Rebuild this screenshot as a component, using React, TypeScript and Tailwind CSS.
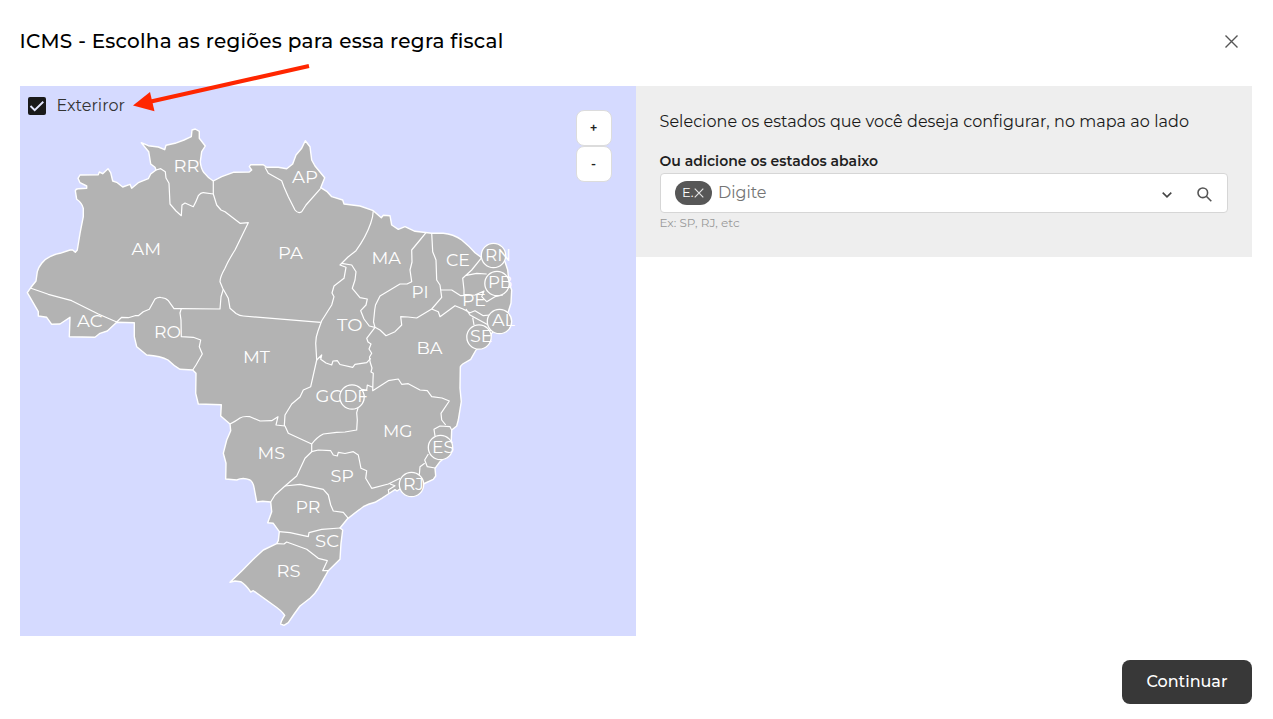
import React from "react";

type Label = { t: string; x: number; w: number; y: number; c?: [number, number] };

const OUTLINE =
  "M27.3 292.7L31 287.3L36 281L37.3 271.7Q38 268 41.7 263.3Q45 259 50 256.7Q55 254 60 253.3L70 250L72.7 250L75.3 252.3L77.3 250L80 233.3L83.3 216.7L83.3 208.3Q82 203 76.7 199.3L75.3 190.7Q76 188.6 78.3 188.7L86.7 188.3L86.7 186L80 182.7L78 178.3L80 175L98.3 174.7L99.3 172L102.7 173.7L108 168.7L110.7 172.7L112.7 181L116.7 182.3L122.7 187L130 184.3L131.7 188.3L138.3 182.7L148.3 178.7L150.7 174L156 170L155 167.3L150.7 164L148.7 151.7L141.3 142.7L148.3 145.7L158.3 147L164.7 149.7L166 145.3L175 143.3L184 140L191.3 136.7L192 130L195.3 129L199.3 131.3L199.3 138.3L205.3 146L201.7 151.7L200.3 161.7Q201 169 204 172.7Q208 178 213.3 181L221.7 176.7L233.3 172.3L249.3 172L251.7 170L249.3 166.7L250.7 164.7L263.3 164.7L266.7 167.3L278.3 167.3L286.7 168.7L292.7 164L296 155L301.7 148.3L305.3 140.7L310 146.7L311.7 160L315 166L324.7 177.7L320.7 187.7L326.7 191.3L331.7 196.7L342.7 200L344 204L360 206L373.3 210.7L381.3 217.7L383.3 215.3L390 215.7L391.7 225L398.3 229.3L405 226.7L415 231.3L431.7 233.3L443.3 233.3Q453 234 461.7 240Q469 246 475 252.7L481.7 257.7L494 254L505 261.7L507.7 270L509 283L511.7 290L511 303.3L508.3 311.7L500 325L491.7 333.3L488 343L476 350L470.7 359.3L462.7 364Q460 366 460.3 368.3L460 388.3L461.3 401.7L458.3 420L456.7 426L451.7 430L451.3 440L450 453L440 461.7L435 468.3L435.7 476L433.3 479.3L423.3 484L411 492L403 487L397 491L395 489.7L388.3 494L381.7 498.3L375 502.3Q368 504 363.3 506.7Q356 512 347.3 519L340 528L342.7 530L341 543.3L340 559.3L328.3 570.7L318.3 588.3Q315 594 310 598.3L300 606Q294 614 288.3 622.7L284 625.3L280.7 624Q281 621 284.7 615.3Q282 611 273.3 605L253.3 590.7L250.7 592Q246 585 240.7 581.7L235 581L230 582.3L241.7 571L253.3 559.3L263.3 550L276.7 543.7L278.3 540.7L279.3 531.7L273.3 523.3L267.7 522.7L271.7 511.7L270.7 502L262.7 501.3L256.7 502L254 487.3Q253 482 250 480Q243 477 236.7 480L225.7 479L226 463.3L223.3 453.3L226.7 440L230.7 430.7L230 424L220.7 416L221.3 404.7L198.3 404L195.7 393.3L196 373.3L192.7 370L180 369.3Q174 366 168 360Q161 356 146.7 355L136.7 346.7L134.3 336.7L134.3 322.7L116.7 322.3L107.3 331L100 333.3L95 337.3L69.3 336.7L70 317.3L60 324L51.7 324.3L46.7 317.3L38.3 316L38.3 311.7Z";

const BORDERS = [
  "M31 288.3L48.3 294.3L71.7 300.7L98.3 314L116.7 322L121.7 317.3L128.3 317.7L135 315.7L138.3 315.7L143.3 311.7L149.3 309.3L155 299Q158 297 161 297.5Q166 298 168.3 300.7L174 308.7L181.3 308.7L220 309L221 296.7L223.3 289.3",
  "M156 170L160.7 168.7L165.3 171.7L166 178L169 183.3L170 204L176 211L181.3 215.7L182 205L185 203L193.3 206.7Q196 202 198.3 195.7Q201 192.5 203.3 192.7L213.3 194L213.3 181",
  "M213.3 194L216.7 205L221 210L225 211.7L240 223.3L248.3 222.7L235 250Q228 261 225 268.3Q220 277 220 281.7L222.7 288.3L228.3 298.3L230 308.3L236 313.5Q240 316 243.3 316L320.7 322.3",
  "M265 167.3L268.3 173.3L281.7 180.7L284 187L288.3 196.7L295 210Q298 214 301.7 211.7L306 205L320.7 188.3",
  "M373.3 210.7Q373 217 370.7 223.3Q366 237 356 250.7L348 257L340 265L346 267.3L344 278.3L334 286L332 293L334 296.7L331.7 305L321.7 320.7L318 331Q315.7 337 315.7 343.3L316.7 360L310.7 386.7L303.3 390L300 397L291.7 404L285 415L284.3 426",
  "M341.7 263.3L351.7 265L356 271.7L355 280L352.3 288.3L360 297.7L367.3 299L366 305L360.7 310.7L364 319L369.3 326L375 327.3",
  "M426 232.7L420 240L411.7 250L412 262L410 270L411.7 281.7L407 284L400 284L390 290L380 296L375.5 305L374.7 310L373.5 322L375 327.3L380 330L386 335.7L395 331.7L401.7 325L400.7 316.7L408 317L416.7 318L431.7 309L441.7 297.3L440 285L436.7 280L436 260L432.7 251.7L431.7 233.3",
  "M440.7 290L451.7 290L460.7 295.7L475 295L484 291L481.7 296.7L486.7 301.7L495 296.7L503 295",
  "M481.7 257.7L471.7 270L462.7 278.3L464 290L464 295M465 275.7L476.7 273.3L486.7 274",
  "M431.7 309L438.3 311.7L440 316.7L455 305.7L463 309L470 312.7L475 310.7L483.3 315.7L490 315M466 309L470 315L488.3 325M472.7 317.7L474 325",
  "M375 327.3L366.7 338.3L368 342L371 344L369 349L371.7 353.3L369.5 357L370 361.7L372 368L371 372L373.3 373.3L373 380L372.7 390.7L388.3 380.7L398.3 379L401.7 384.3L408.3 383.7L420 390L427.3 390.7L431.7 396.7L442 398L449.3 401L441 413.3L441.7 420L445.7 425",
  "M316.7 360L321.7 355L320.7 359.3L326 363L331.7 365L333 361L337.3 360.7L340 364.5L352.7 367.3L355 364.3L366.7 362.7L370.7 358.3",
  "M230 424Q236 421 240 418Q243 416 250 416.7L260 421L271.7 420.7L278 416.7L276 425L285 426L288.3 433.3L311.7 444L311.7 451.7",
  "M311.7 444Q317 437 323.3 434L336.7 432.3L345 432L356.7 430L357.3 420L356.7 412.7L358 408M361.7 389.3L366.7 390L367.3 385L372.7 387.3",
  "M435 436L434 429.3L440 426L450 426.7L451.7 430M428.3 454L424.7 460L427.3 466.7L435 468M424.7 463.3L420 466.7L419.3 475M400 478.3L388.3 484L371.7 488.3L365.7 478.3L366.7 470.7L361 468.3L358.3 455L353.3 451.7L345 453.5L338.3 452.3L337.3 456L333.3 455L330.7 450.7L318.3 450L311.7 451.7L305 458.3L296.7 476L285 486L275 495L270.7 502M390 484L395 485.7L388.3 490L389 494",
  "M285 486L300 484.3L323.3 489.3L328.3 495L330.7 505L333.3 511L343.3 512.3L348.3 518.3",
  "M279.3 531.7L290 532.7L308.3 536.7L309 532.7L321.7 529.3L340 528M276.7 543.7L284 544L286.7 542L306.7 549.3L318.3 558.3L327.3 560.7L322.7 570.7L328.3 570.7",
  "M181.3 308.7L180 313L181 320L181.3 336.7L193.3 337.3L200.7 340L199.3 346.7L202.3 354L196 365L192.7 370",
];

const LABELS: Label[] = [
  { t: "RR", x: 174.5, w: 24, y: 172 },
  { t: "AP", x: 293, w: 24, y: 183 },
  { t: "AM", x: 132.5, w: 27.5, y: 255 },
  { t: "PA", x: 279, w: 23, y: 259 },
  { t: "MA", x: 372.5, w: 27.5, y: 264 },
  { t: "PI", x: 412.5, w: 15, y: 298 },
  { t: "CE", x: 447, w: 22, y: 266 },
  { t: "PE", x: 463, w: 22, y: 306 },
  { t: "BA", x: 417.5, w: 24, y: 354 },
  { t: "TO", x: 338, w: 23.5, y: 331 },
  { t: "AC", x: 78, w: 23.5, y: 327 },
  { t: "RO", x: 155, w: 25, y: 338 },
  { t: "MT", x: 244, w: 25, y: 363 },
  { t: "GO", x: 316.5, w: 27, y: 402 },
  { t: "MG", x: 384, w: 27.5, y: 437 },
  { t: "MS", x: 258.5, w: 25.5, y: 459 },
  { t: "SP", x: 331.5, w: 21.5, y: 482 },
  { t: "PR", x: 296.5, w: 23, y: 513 },
  { t: "SC", x: 316, w: 22, y: 547 },
  { t: "RS", x: 277.5, w: 22, y: 577 },
  { t: "RN", x: 486, w: 24, y: 261, c: [493.5, 255.5] },
  { t: "PB", x: 489, w: 22.5, y: 288, c: [497, 283.5] },
  { t: "AL", x: 493, w: 21, y: 326, c: [499.5, 321.5] },
  { t: "SE", x: 471, w: 20.5, y: 342, c: [479, 337] },
  { t: "DF", x: 344.5, w: 22.5, y: 402, c: [352, 397] },
  { t: "ES", x: 433, w: 20, y: 453, c: [440.5, 447.5] },
  { t: "RJ", x: 404, w: 19, y: 490, c: [411.5, 484.5] },
];

function BrazilMap() {
  return (
    <svg
      className="block h-[550px] w-[616px]"
      viewBox="20 86 616 550"
      fontFamily="Montserrat, Inter, sans-serif"
      fontSize="16.5"
      fontWeight="400"
    >
      <path d={OUTLINE} fill="#b3b3b3" stroke="#fff" strokeWidth="1.4" strokeLinejoin="round" />
      <g fill="none" stroke="#fff" strokeWidth="1.2" strokeLinejoin="round">
        {BORDERS.map((d) => (
          <path key={d} d={d} />
        ))}
      </g>
      {LABELS.map(({ t, x, w, y, c }) => (
        <g key={t}>
          {c && <circle cx={c[0]} cy={c[1]} r="12.2" fill="#b3b3b3" stroke="#fff" strokeWidth="1.3" />}
          <text x={x - 1} y={y} textLength={w + 2} lengthAdjust="spacingAndGlyphs" fill="#fff">
            {t}
          </text>
        </g>
      ))}
    </svg>
  );
}

function ZoomButton({ children }: { children: React.ReactNode }) {
  return (
    <button className="flex h-9 w-9 items-center justify-center rounded-lg border border-[#dcdcdc] bg-white pr-px text-[13px] font-semibold text-[#222]">
      {children}
    </button>
  );
}

export default function App() {
  return (
    <div className="relative flex h-[719px] w-[1273px] flex-col overflow-hidden bg-white pl-5 pr-[21px] font-['Montserrat','Inter',sans-serif] text-black">
      <header className="flex h-[86px] items-start justify-between pt-[26px]">
        <h1 className="-ml-[0.5px] whitespace-nowrap text-[20px] font-medium leading-[30px] tracking-[0.26px]">
          ICMS - Escolha as regiões para essa regra fiscal
        </h1>
        <button aria-label="Fechar" className="mr-[14px] mt-[9px]">
          <svg className="block h-[13px] w-[13px]" viewBox="0 0 13 13" stroke="#555" strokeWidth="1.4">
            <path d="M.5.5l12 12M12.5.5l-12 12" />
          </svg>
        </button>
      </header>

      <main className="flex h-[550px] items-start">
        <section className="relative h-[550px] w-[616px] bg-[#d5daff]">
          <BrazilMap />
          <label className="absolute left-2 top-[9px] flex items-center gap-[10.5px]">
            <span className="flex h-[18px] w-[18px] items-center justify-center rounded-[2px] bg-[#1a1a1a]">
              <svg className="h-[18px] w-[18px]" viewBox="0 0 18 18" fill="none" stroke="#e4e7ff" strokeWidth="1.9">
                <path d="M2.5 9l4.2 4.2L15.3 4.7" />
              </svg>
            </span>
            <span className="whitespace-nowrap text-[16px] font-normal leading-[22px] tracking-[0.04px] text-[#333]">Exteriror</span>
          </label>
          <div className="absolute left-[556px] top-6 flex flex-col">
            <ZoomButton>+</ZoomButton>
            <ZoomButton>-</ZoomButton>
          </div>
        </section>

        <section className="flex h-[171px] w-[616px] flex-col bg-[#eee] px-6 pt-6">
          <p className="-ml-[0.5px] whitespace-nowrap text-[16px] font-normal leading-6 tracking-[0.05px] text-[#1a1a1a]">
            Selecione os estados que você deseja configurar, no mapa ao lado
          </p>
          <p className="-ml-[0.5px] mt-[17px] whitespace-nowrap text-[14px] font-semibold leading-5 tracking-[0.02px] text-[#1f1f1f]">
            Ou adicione os estados abaixo
          </p>
          <div className="mt-[2px] flex h-10 items-center rounded-[4px] border border-[#d6d6d6] bg-white pl-[14px] pr-[15px]">
            <span className="flex h-6 w-[37px] items-center rounded-full bg-[#575757] pl-[7px] text-[13px] font-normal text-white">
              E.
              <svg className="h-[10px] w-[10px]" viewBox="0 0 10 10" stroke="#e4e4e4" strokeWidth="1.2">
                <path d="M.7.7l8.6 8.6M9.3.7L.7 9.3" />
              </svg>
            </span>
            <span className="ml-[6px] whitespace-nowrap text-[16px] font-normal leading-6 tracking-[0px] text-[#757575]">Digite</span>
            <svg className="ml-auto mt-[3px] h-[6px] w-[10px]" viewBox="0 0 10 6" fill="none" stroke="#444" strokeWidth="1.6">
              <path d="M.7.7L5 4.8L9.3.7" />
            </svg>
            <svg className="ml-[25px] mt-[3px] h-[15px] w-[15px]" viewBox="0 0 15 15" fill="none" stroke="#555" strokeWidth="1.6">
              <circle cx="5.8" cy="5.8" r="4.8" />
              <path d="M9.3 9.3l5 5" />
            </svg>
          </div>
          <p className="-ml-[0.5px] mt-[1px] whitespace-nowrap text-[12px] font-normal leading-[18px] tracking-[0.02px] text-[#999]">Ex: SP, RJ, etc</p>
        </section>
      </main>

      <footer className="flex justify-end pt-6">
        <button className="h-11 w-[130px] whitespace-nowrap rounded-lg bg-[#383838] text-[16px] font-medium tracking-[-0.02px] text-white">
          Continuar
        </button>
      </footer>

      <svg className="pointer-events-none absolute left-[130px] top-[60px] h-[56px] w-[184px]" viewBox="130 60 184 56">
        <path d="M309 66L151 101.5" stroke="#ff2600" strokeWidth="4" />
        <path d="M133 105.5L150 92L154.5 111.3Z" fill="#ff2600" />
      </svg>
    </div>
  );
}
